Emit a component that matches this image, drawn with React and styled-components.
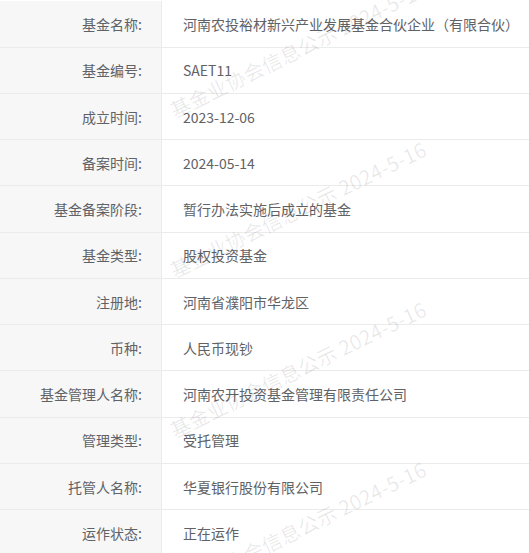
import React from 'react';
import styled, { createGlobalStyle } from 'styled-components';

const rows = [
	['基金名称:', '河南农投裕材新兴产业发展基金合伙企业（有限合伙）'],
	['基金编号:', 'SAET11'],
	['成立时间:', '2023-12-06'],
	['备案时间:', '2024-05-14'],
	['基金备案阶段:', '暂行办法实施后成立的基金'],
	['基金类型:', '股权投资基金'],
	['注册地:', '河南省濮阳市华龙区'],
	['币种:', '人民币现钞'],
	['基金管理人名称:', '河南农开投资基金管理有限责任公司'],
	['管理类型:', '受托管理'],
	['托管人名称:', '华夏银行股份有限公司'],
	['运作状态:', '正在运作'],
];

const marks = [49, 209, 369, 529];

function App() {
	return (
		<>
			<GlobalStyle />
			<StyledTable>
				{rows.map(([label, value]) => (
					<Row key={label}>
						<Label>{label}</Label>
						<Value>{value}</Value>
					</Row>
				))}
				{marks.map((top) => (
					<Watermark key={top} style={{ top }}>
						基金业协会信息公示 2024-5-16
					</Watermark>
				))}
			</StyledTable>
		</>
	);
}

const GlobalStyle = createGlobalStyle`
	html, body {
		margin: 0;
		padding: 0;
		background: #fff;
	}

	body {
		font-family: "Noto Sans CJK SC", "Microsoft YaHei", sans-serif;
		overflow: hidden;
	}
`;

const StyledTable = styled.div`
	position: relative;
	width: 529px;
	height: 553px;
	padding-top: 1.45px;
	box-sizing: border-box;
	overflow: hidden;
`;

const Row = styled.div`
	display: grid;
	grid-template-columns: 162px 1fr;
	height: 46.25px;
	box-sizing: border-box;
	border-bottom: 1px solid #ebebeb;
`;

const Label = styled.div`
	display: flex;
	align-items: center;
	justify-content: flex-end;
	padding-right: 19px;
	background: #f7f7f7;
	border-right: 1px solid #ebebeb;
	font-size: 14px;
	color: #606266;
	white-space: nowrap;
`;

const Value = styled.div`
	display: flex;
	align-items: center;
	padding-left: 21px;
	font-size: 14px;
	color: #606266;
	white-space: nowrap;
`;

const Watermark = styled.span`
	position: absolute;
	left: 298px;
	transform: translate(-50%, -50%) rotate(-26deg);
	font-size: 20px;
	letter-spacing: 0.3px;
	color: rgba(0, 0, 0, 0.09);
	white-space: nowrap;
	pointer-events: none;
	user-select: none;
`;

export default App;
